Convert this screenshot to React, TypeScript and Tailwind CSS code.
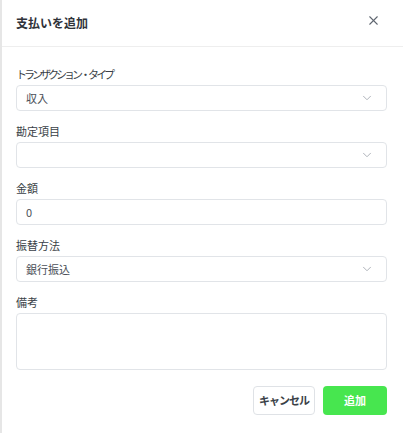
import { X, ChevronDown } from "lucide-react"

const font = "font-['Noto_Sans_CJK_JP','Noto_Sans',sans-serif]"

function Label({ children, tight }: { children: React.ReactNode; tight?: boolean }) {
  return (
    <div className={`h-4 text-[11px] leading-4 text-[#3a3f47] ${tight ? "tracking-[-3px]" : ""}`}>
      {children}
    </div>
  )
}

function SelectBox({ value }: { value?: string }) {
  return (
    <div className="mt-[3px] flex h-[26px] items-center justify-between rounded border border-[#e1e4e8] pl-[9px] pr-3">
      <span className="text-[11px] text-[#4b5058]">{value}</span>
      <ChevronDown size={14} strokeWidth={1.5} className="text-[#a3a8b0]" />
    </div>
  )
}

export default function App() {
  return (
    <div className={`h-[433px] w-[403px] border-l-2 border-[#e6e6e6] bg-white ${font}`}>
      {/* Header */}
      <div className="flex h-[47px] items-center justify-between border-b border-[#eeeeee] pl-[14px] pr-[22px]">
        <h2 className="text-[12px] font-bold text-[#2f333a]">支払いを追加</h2>
        <X size={15} strokeWidth={1.7} className="-mt-[6px] text-[#5f6670]" />
      </div>

      {/* Form */}
      <div className="flex flex-col gap-3 pl-[14px] pr-4 pt-[19px]">
        <div>
          <Label tight>トランザクション・タイプ</Label>
          <SelectBox value="収入" />
        </div>
        <div>
          <Label>勘定項目</Label>
          <SelectBox />
        </div>
        <div>
          <Label>金額</Label>
          <div className="mt-[3px] flex h-[26px] items-center rounded border border-[#e1e4e8] pl-[9px] text-[11px] text-[#4b5058]">
            0
          </div>
        </div>
        <div>
          <Label>振替方法</Label>
          <SelectBox value="銀行振込" />
        </div>
        <div>
          <Label>備考</Label>
          <div className="mt-[3px] h-[57px] rounded border border-[#e1e4e8]" />
        </div>

        <div className="mt-1 flex justify-end gap-2">
          <button className="h-[29px] w-[62px] rounded border border-[#dfe2e6] bg-white text-[11px] font-bold tracking-[-1px] text-[#3a3f47]">
            キャンセル
          </button>
          <button className="h-[29px] w-[64px] rounded bg-[#47e64f] text-[11px] font-bold text-white">
            追加
          </button>
        </div>
      </div>
    </div>
  )
}
